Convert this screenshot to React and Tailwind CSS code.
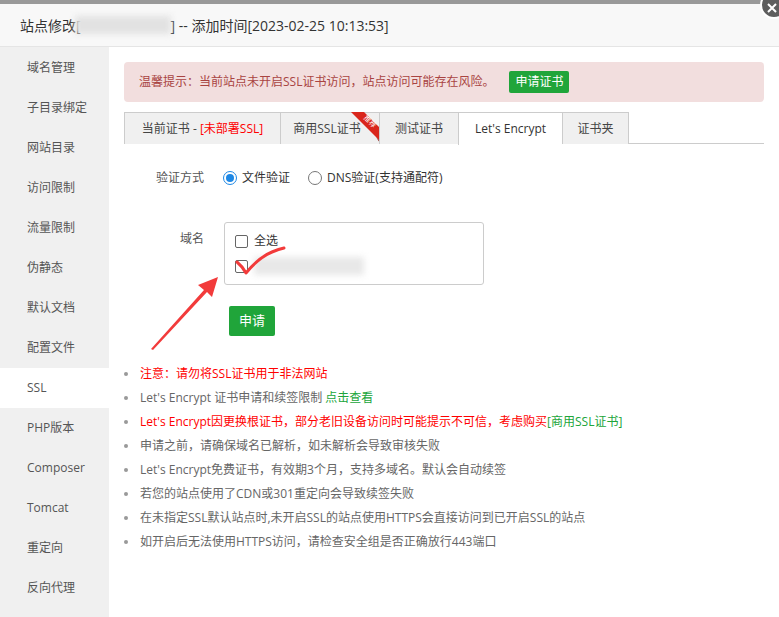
import React from "react";

const menu = [
  "域名管理", "子目录绑定", "网站目录", "访问限制", "流量限制", "伪静态", "默认文档",
  "配置文件", "SSL", "PHP版本", "Composer", "Tomcat", "重定向", "反向代理",
];

const tabs = [
  { key: "current", label: null },
  { key: "biz", label: "商用SSL证书" },
  { key: "test", label: "测试证书" },
  { key: "le", label: "Let's Encrypt" },
  { key: "folder", label: "证书夹" },
];

const tips = [
  { c: "text-[#ff0000]", t: "注意：请勿将SSL证书用于非法网站" },
  { c: "text-[#666]", t: "Let's Encrypt 证书申请和续签限制 ", link: "点击查看" },
  { c: "text-[#ff0000]", t: "Let's Encrypt因更换根证书，部分老旧设备访问时可能提示不可信，考虑购买", link: "[商用SSL证书]" },
  { c: "text-[#666]", t: "申请之前，请确保域名已解析，如未解析会导致审核失败" },
  { c: "text-[#666]", t: "Let's Encrypt免费证书，有效期3个月，支持多域名。默认会自动续签" },
  { c: "text-[#666]", t: "若您的站点使用了CDN或301重定向会导致续签失败" },
  { c: "text-[#666]", t: "在未指定SSL默认站点时,未开启SSL的站点使用HTTPS会直接访问到已开启SSL的站点" },
  { c: "text-[#666]", t: "如开启后无法使用HTTPS访问，请检查安全组是否正确放行443端口" },
];

function Radio({ checked, children }) {
  return (
    <label className="flex items-center gap-[5px]">
      <span className={`w-[14px] h-[14px] rounded-full border flex items-center justify-center ${checked ? "border-[#1e88e5]" : "border-[#777]"}`}>
        {checked && <span className="w-[8px] h-[8px] rounded-full bg-[#1e88e5]" />}
      </span>
      <span>{children}</span>
    </label>
  );
}

export default function App() {
  return (
    <div
      className="relative w-[779px] h-[617px] overflow-hidden bg-white text-[12px] text-[#333]"
      style={{ fontFamily: '"Open Sans", "Noto Sans CJK SC", sans-serif' }}
    >
      <div className="h-[4px] bg-[#999]" />
      {/* header */}
      <div className="h-[43px] bg-[#f8f8f8] border-b border-[#e5e5e5] flex items-center pl-[20px] text-[14px] text-[#333]">
        <span>站点修改[</span>
        <span className="inline-block w-[96px] h-[18px] bg-[#e2e2e2] blur-[3px] -ml-[6px]" />
        <span>] -- 添加时间[2023-02-25 10:13:53]</span>
      </div>
      {/* close */}
      <div className="absolute -top-[9px] -right-[9px] w-[28px] h-[28px] rounded-full bg-[#5e5e5e] border-2 border-white flex items-center justify-center">
        <svg width="10" height="10" viewBox="0 0 10 10" className="-ml-[4px] mt-[5px]">
          <path d="M1 1L9 9M9 1L1 9" stroke="#fff" strokeWidth="2" />
        </svg>
      </div>

      <div className="flex h-[570px]">
        {/* sidebar */}
        <div className="w-[109px] bg-[#f0f0f0] shrink-0 pt-[1px]">
          {menu.map((m) => (
            <div
              key={m}
              className={`h-[40px] flex items-center pl-[27px] text-[12px] text-[#555] ${m === "SSL" ? "bg-white" : ""}`}
            >
              {m}
            </div>
          ))}
        </div>

        {/* main */}
        <div className="flex-1 pl-[15px] pr-[15px] pt-[15px]">
          <div className="h-[40px] rounded-[4px] bg-[#f2dede] flex items-center pl-[15px] text-[#a94442]">
            <span>温馨提示：当前站点未开启SSL证书访问，站点访问可能存在风险。</span>
            <span className="ml-[15px] h-[22px] px-[6px] rounded-[2px] bg-[#20a53a] text-white flex items-center">申请证书</span>
          </div>

          {/* tabs */}
          <div className="mt-[10px] h-[32px] flex border-b border-[#ccc]">
            {tabs.map((t, i) => {
              const active = t.key === "le";
              const w = ["w-[156px]", "w-[99px]", "w-[79px]", "w-[104px]", "w-[67px]"][i];
              return (
                <div
                  key={t.key}
                  className={`relative ${w} h-[32px] flex items-center justify-center border-t border-l border-[#ccc] ${i === tabs.length - 1 ? "border-r" : ""} ${active ? "bg-white h-[33px] text-[#333]" : "bg-[#f0f0f0] text-[#444]"}`}
                >
                  {t.label === null ? (
                    <span>当前证书 - <span className="text-[#ff0000]">[未部署SSL]</span></span>
                  ) : (
                    <span className={t.key === "biz" ? "-ml-[6px]" : ""}>{t.label}</span>
                  )}
                  {t.key === "biz" && (
                    <div className="absolute -top-[3px] right-[-1px] w-[30px] h-[33px]">
                      <svg width="30" height="33" viewBox="0 0 30 33" className="absolute inset-0">
                        <polygon points="1,2 14,2 30,18 30,31 26,27" fill="#d9261c" />
                        <polygon points="26,27 30,31 30,33" fill="#8a150f" />
                      </svg>
                      <span className="absolute top-[8px] left-[13px] text-[7px] leading-none text-white rotate-45 whitespace-nowrap">推荐</span>
                    </div>
                  )}
                </div>
              );
            })}
          </div>

          {/* verify row */}
          <div className="mt-[19px] h-[30px] flex items-center">
            <div className="w-[80px] text-right text-[#555]">验证方式</div>
            <div className="ml-[19px] flex items-center gap-[18px] text-[#333]">
              <Radio checked>文件验证</Radio>
              <Radio>DNS验证(支持通配符)</Radio>
            </div>
          </div>

          {/* domain row */}
          <div className="mt-[29px] flex">
            <div className="w-[80px] text-right pt-[9px] leading-[16px] text-[#555]">域名</div>
            <div className="ml-[20px] w-[260px] h-[63px] border border-[#ccc] rounded-[3px] pl-[10px] pt-[11px] flex flex-col gap-[11px]">
              <div className="flex items-center gap-[6px] h-[14px]">
                <span className="w-[13px] h-[13px] border border-[#666] rounded-[2px]" />
                <span>全选</span>
              </div>
              <div className="flex items-center gap-[6px] h-[14px]">
                <span className="w-[13px] h-[13px] border border-[#666] rounded-[2px]" />
                <span className="inline-block w-[110px] h-[18px] bg-[#e8e8e8] blur-[3px]" />
              </div>
            </div>
          </div>

          <button className="mt-[21px] ml-[105px] w-[46px] h-[30px] rounded-[2px] bg-[#20a53a] text-white text-[13px]">
            申请
          </button>

          <ul className="mt-[26px]">
            {tips.map((t, i) => (
              <li key={i} className="h-[24px] flex items-center">
                <span className="w-[4px] h-[4px] rounded-full bg-[#999] mr-[12px]" />
                <span className={t.c}>
                  {t.t}
                  {t.link && <span className="text-[#20a53a]">{t.link}</span>}
                </span>
              </li>
            ))}
          </ul>
        </div>
      </div>

      {/* hand-drawn annotations */}
      <svg className="absolute inset-0 pointer-events-none" width="779" height="617">
        <path d="M237 262 Q242 266 246 273 Q258 258 272 252 Q279 249 284 248" stroke="#f23b3b" strokeWidth="3" fill="none" strokeLinecap="round" strokeLinejoin="round" />
        <polygon points="151,349 204,290 198,285 218,277 212,297 207,292 153,350" fill="#f23b3b" />
      </svg>
    </div>
  );
}
